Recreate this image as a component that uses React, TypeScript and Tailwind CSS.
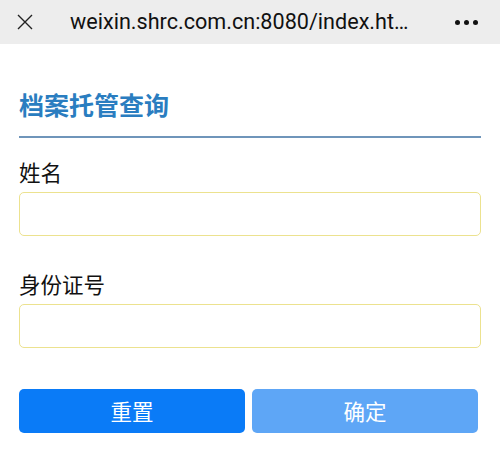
import { useState } from 'react';

const cjk = { fontFamily: '"Noto Sans CJK SC", "Noto Sans", sans-serif' };

export default function App() {
  const [name, setName] = useState('');
  const [idNo, setIdNo] = useState('');

  return (
    <div className="w-[500px] h-[467px] bg-white overflow-hidden" style={cjk}>
      {/* 顶部栏 */}
      <div className="h-[44px] bg-[#ededed] flex items-center pl-[16px] pr-[22px]">
        <svg width="18" height="18" viewBox="0 0 18 18" className="shrink-0">
          <path d="M2 2 L16 16 M16 2 L2 16" stroke="#222" strokeWidth="1.4" fill="none" />
        </svg>
        <div className="ml-[36px] text-[21.6px] text-[#111] leading-none" style={{ fontFamily: '"Roboto", "Noto Sans", sans-serif' }}>
          weixin.shrc.com.cn:8080/index.ht…
        </div>
        <div className="ml-auto flex gap-[4px]">
          <span className="w-[5px] h-[5px] rounded-full bg-[#111]" />
          <span className="w-[5px] h-[5px] rounded-full bg-[#111]" />
          <span className="w-[5px] h-[5px] rounded-full bg-[#111]" />
        </div>
      </div>

      <div className="px-[19px] pt-[44px]">
        <h1 className="text-[25px] leading-[32px] font-bold text-[#2a7dc0]">档案托管查询</h1>
        <div className="mt-[16px] h-[2px] bg-[#6f95ba]" />

        <label className="block mt-[20px] text-[21.5px] leading-[28px] text-[#111]">姓名</label>
        <input
          value={name}
          onChange={e => setName(e.target.value)}
          className="mt-[6px] w-full h-[44px] border border-[#ece28f] rounded-[5px] px-3 outline-none"
        />

        <label className="block mt-[34px] text-[21.5px] leading-[28px] text-[#111]">身份证号</label>
        <input
          value={idNo}
          onChange={e => setIdNo(e.target.value)}
          className="mt-[6px] w-full h-[44px] border border-[#ece28f] rounded-[5px] px-3 outline-none"
        />

        <div className="mt-[41px] flex gap-[7px] pr-[3px]">
          <button
            onClick={() => { setName(''); setIdNo(''); }}
            className="flex-1 h-[44px] rounded-[5px] bg-[#0a7bf7] text-white text-[21.5px]"
          >
            重置
          </button>
          <button className="flex-1 h-[44px] rounded-[5px] bg-[#5ea6f6] text-white text-[21.5px]">
            确定
          </button>
        </div>
      </div>
    </div>
  );
}
